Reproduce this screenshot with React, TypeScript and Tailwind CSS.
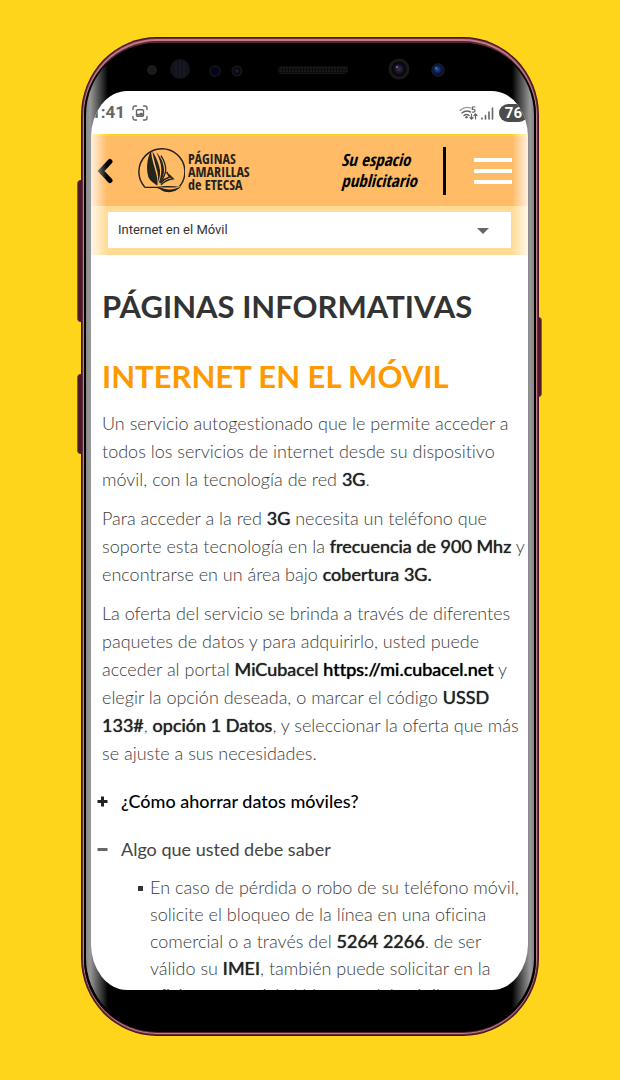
import React from "react";

const fade =
  "pointer-events-none absolute inset-y-0 w-4 from-white/80 to-transparent";

function Sensors() {
  return (
    <svg viewBox="0 0 320 28" className="h-7 w-80" aria-hidden="true">
      <defs>
        <pattern id="mesh" width="3" height="3" patternUnits="userSpaceOnUse">
          <rect width="3" height="3" fill="#0c0c0c" />
          <circle cx="1" cy="1" r="0.8" fill="#2c2c2c" />
        </pattern>
        <radialGradient id="blue" cx="45%" cy="45%">
          <stop offset="0" stopColor="#2a55a8" />
          <stop offset="0.5" stopColor="#0c2560" />
          <stop offset="1" stopColor="#050a1c" />
        </radialGradient>
        <radialGradient id="lens">
          <stop offset="0" stopColor="#3b2f4c" />
          <stop offset="0.6" stopColor="#0c0912" />
          <stop offset="1" stopColor="#020202" />
        </radialGradient>
      </defs>
      <circle cx="7" cy="15" r="5" fill="#1b1b1d" />
      <circle cx="35" cy="14" r="10" fill="#13131a" />
      <path d="M31 7v14M35 6v16M39 7v14" stroke="#1b1b2a" strokeWidth="1.5" />
      <circle cx="70" cy="16" r="5" fill="#03031c" stroke="#11111d" strokeWidth="2" />
      <circle cx="92" cy="16" r="4.5" fill="#05050c" stroke="#14141e" strokeWidth="2" />
      <circle cx="92" cy="16" r="2" fill="#1c1c30" />
      <rect x="133" y="11" width="70" height="8" rx="4" fill="url(#mesh)" />
      <circle cx="254" cy="14" r="9" fill="url(#lens)" stroke="#19191b" strokeWidth="3" />
      <circle cx="252" cy="12" r="1.3" fill="#6b5880" />
      <circle cx="293" cy="15" r="6" fill="url(#blue)" stroke="#141c2c" strokeWidth="1.5" />
      <circle cx="291" cy="13" r="1.2" fill="#3c69b8" />
    </svg>
  );
}

function CaptureIcon() {
  return (
    <svg viewBox="0 0 16 16" className="size-4" fill="none" stroke="#666" strokeWidth="1.4" strokeLinecap="round" aria-hidden="true">
      <path d="M1 4.500V3a2 2 0 0 1 2-2h1.500M11.500 1H13a2 2 0 0 1 2 2v1.500M15 11.500V13a2 2 0 0 1-2 2h-1.500M4.500 15H3a2 2 0 0 1-2-2v-1.500" />
      <rect x="4.500" y="4.800" width="7" height="6.400" rx="1" />
      <path d="M5 10.500V8.500l2 .6 2.200-1.600 1.800 1.200v2z" fill="#666" stroke="none" />
    </svg>
  );
}

function SignalIcons() {
  return (
    <svg viewBox="0 0 36 16" className="h-4 w-9" fill="none" stroke="#666" strokeLinecap="round" aria-hidden="true">
      <path d="M1 5.500Q6 1 12 3" strokeWidth="1.200" stroke="#999" />
      <path d="M3 8Q7 4.500 11.500 7M5 10.500q2.500-2 5 0" strokeWidth="1.500" />
      <circle cx="7.500" cy="12.300" r="1.200" fill="#666" stroke="none" />
      <path d="M16 2h-2.600v2.300c3.500-.6 3.500 3.200.2 2.900" strokeWidth="1.200" />
      <path d="M12.500 9v5M11 12.500l1.500 1.700 1.500-1.700M16.500 14V9M15 10.500l1.500-1.700 1.500 1.700" strokeWidth="1.200" />
      <path d="M23 14v-1M26.500 14v-3.500M30 14V7M33.500 14V3" strokeWidth="1.600" />
    </svg>
  );
}

function Logo() {
  return (
    <a href="#inicio" className="flex items-center gap-[3px] text-[#26231d]">
      <svg viewBox="22 24 144 144" className="size-12" aria-hidden="true">
        <path d="M45 144A69 69 0 1 1 150 142" fill="none" stroke="currentColor" strokeWidth="4.500" />
        <path d="M42 143h38c14 0 18 6 32 8 16 2 30-2 42-9-10 14-28 19-44 17-13-1-18-11-30-12H46z" fill="currentColor" />
        <path d="M84 143c18-3 44-3 66 0-22 4-46 3-66 0z" fill="currentColor" />
        <path d="M64 36C51 58 49 95 57 116c6 11 17 17 26 24 2-12 0-22-3-34C75 84 66 62 64 36z" fill="currentColor" />
        <path d="M68 37c4 24 10 44 15 62 2 10 3 20 2 30 7-15 8-31 4-45-4-16-11-32-21-47z" fill="currentColor" />
        <path d="M80 40c9 18 15 36 15 52 0 16-4 28-8 42 12-14 17-27 16-43-1-20-10-37-23-51z" fill="currentColor" />
        <path d="M94 50c10 16 15 30 14 44-1 13-8 25-17 38" fill="none" stroke="currentColor" strokeWidth="4" />
        <path d="M92 132c7-8 15-14 28-18l-9-15M94 137c10-10 22-16 36-18l-12-12" fill="none" stroke="currentColor" strokeWidth="4.500" />
      </svg>
      <span className="block font-['Open_Sans_Condensed','Roboto_Condensed',Roboto,sans-serif] text-[14px] leading-[13px] font-bold">
        PÁGINAS
        <br />
        AMARILLAS
        <br />
        de ETECSA
      </span>
    </a>
  );
}

function B({ children }: { children: React.ReactNode }) {
  return (
    <strong className="font-normal text-[#222] [text-shadow:0_0_1px_#222]">{children}</strong>
  );
}

export default function App() {
  return (
    <div className="flex h-screen bg-[#ffd51c] px-[81px] pt-[37px] pb-[44px] font-['Lato',sans-serif]">
      <div className="relative flex min-w-0 flex-1">
        <span className="absolute top-[143px] -left-1 h-[142px] w-[5px] rounded-l-sm border-l border-[#7d5a4a] bg-[#4a1a28]" />
        <span className="absolute top-[337px] -left-1 h-[80px] w-[5px] rounded-l-sm border-l border-[#7d5a4a] bg-[#4a1a28]" />
        <span className="absolute top-[280px] -right-[3px] h-[80px] w-1 rounded-r-sm border-r border-[#8d5560] bg-[#4a1a28]" />
        <div className="flex min-w-0 flex-1 rounded-[76px/78px] bg-[#3d1621] p-px">
          <div className="flex min-w-0 flex-1 rounded-[75px/77px] bg-[#6b2c3b] p-px">
            <div className="flex min-w-0 flex-1 rounded-[74px/76px] bg-[#c17c88] px-px pt-[2px] pb-px">
              <div className="flex min-w-0 flex-1 rounded-[73px/74px] bg-[#5a2431] pt-[2px] pb-px">
                <div className="flex min-w-0 flex-1 rounded-[73px/72px] bg-black px-[2px] pb-[2px]">
                  <div className="flex min-w-0 flex-1 flex-col rounded-[71px/72px] bg-[linear-gradient(to_right,#888,#999_4px,#777_8px,#000_22px,#000_calc(100%-22px),#777_calc(100%-8px),#999_calc(100%-4px),#888)] pr-[6px] pb-10 pl-[5px]">
                    <div className="flex h-[48px] shrink-0 items-center justify-center pt-[4px]">
                      <div className="-ml-[10px]">
                        <Sensors />
                      </div>
                    </div>
                    <main className="relative min-h-0 flex-1 overflow-hidden rounded-[36px/46px] bg-white">
                      <div className="flex h-[43px] items-center justify-between font-['Roboto',sans-serif] text-[#666]">
                        <div className="flex items-center gap-[7px]">
                          <span className="text-[17px] font-bold">1:41</span>
                          <CaptureIcon />
                        </div>
                        <div className="flex items-center gap-1">
                          <SignalIcons />
                          <span className="rounded-full bg-[#4c4c4c] px-[6px] text-[15px] leading-[18px] font-bold text-white">76</span>
                        </div>
                      </div>
                      <div className="relative">
                        <header className="flex h-[72px] items-center border-t-2 border-[#ffd51c] bg-[#ffbb66] pr-4 pl-[6px]">
                          <button type="button" aria-label="Volver" className="mr-6">
                            <svg viewBox="0 0 16 26" className="h-[26px] w-4" fill="none" stroke="#000" strokeWidth="5" strokeLinecap="round" strokeLinejoin="miter" aria-hidden="true">
                              <path d="M13 3.500 4 13l9 9.500" />
                            </svg>
                          </button>
                          <Logo />
                          <p className="ml-auto pb-[2px] font-['Open_Sans_Condensed','Lato',sans-serif] text-[17px] leading-[21px] font-bold whitespace-nowrap text-black italic">
                            Su espacio
                            <br />
                            publicitario
                          </p>
                          <span className="mr-7 ml-[26px] h-12 w-[3px] bg-black" />
                          <button type="button" aria-label="Menú" className="flex w-[38px] flex-col gap-[7px]">
                            <span className="h-1 w-full bg-white" />
                            <span className="h-1 w-full bg-white" />
                            <span className="h-1 w-full bg-white" />
                          </button>
                        </header>
                        <div className="relative bg-[#ffdb96] px-[17px] pt-[6px] pb-[7px]">
                          <select aria-label="Página informativa" className="block h-9 w-full appearance-none bg-white pl-[10px] font-['Roboto',sans-serif] text-[13px] text-[#333]">
                            <option>Internet en el Móvil</option>
                          </select>
                          <svg viewBox="0 0 12 6" className="pointer-events-none absolute top-[22px] right-[39px] h-[6px] w-3" aria-hidden="true">
                            <path d="M0 0h12L6 6z" fill="#666" />
                          </svg>
                        </div>
                        <span className={fade + " left-0 bg-linear-to-r"} />
                        <span className={fade + " right-0 bg-linear-to-l"} />
                      </div>
                      <article className="pt-[30px] pr-2 pl-[11px] text-[18px] leading-7 font-light whitespace-nowrap text-[#3c3c3c] [font-variant-ligatures:none]">
                        <h1 className="text-[31px] leading-[42px] font-bold text-[#333]">PÁGINAS INFORMATIVAS</h1>
                        <h2 className="mt-7 text-[31px] leading-[42px] font-bold text-[#ff9900]">INTERNET EN EL MÓVIL</h2>
                        <p className="mt-3">
                          Un servicio autogestionado que le permite acceder a<br />
                          todos los servicios de internet desde su dispositivo<br />
                          móvil, con la tecnología de red <B>3G</B>.
                        </p>
                        <p className="mt-[11px]">
                          Para acceder a la red <B>3G</B> necesita un teléfono que<br />
                          soporte esta tecnología en la <B>frecuencia de 900 Mhz</B> y<br />
                          encontrarse en un área bajo <B>cobertura 3G.</B>
                        </p>
                        <p className="mt-[11px]">
                          La oferta del servicio se brinda a través de diferentes<br />
                          paquetes de datos y para adquirirlo, usted puede<br />
                          acceder al portal <B>MiCubacel</B>{" "}
                          <a href="https://mi.cubacel.net" className="font-normal text-black [text-shadow:0_0_1px_#000]">https://mi.cubacel.net</a> y<br />
                          elegir la opción deseada, o marcar el código <B>USSD</B><br />
                          <B>133#</B>, <B>opción 1 Datos</B>, y seleccionar la oferta que más<br />
                          se ajuste a sus necesidades.
                        </p>
                        <button type="button" aria-expanded="false" className="mt-5 -ml-[5px] flex items-center gap-[13px] text-[18px] leading-7 font-medium text-black">
                          <svg viewBox="0 0 11 11" className="size-[11px]" stroke="#222" strokeWidth="3" aria-hidden="true">
                            <path d="M0.500 5.500h10M5.500 0.500v10" />
                          </svg>
                          ¿Cómo ahorrar datos móviles?
                        </button>
                        <button type="button" aria-expanded="true" className="mt-5 -ml-[5px] flex items-center gap-[13px] text-[18px] leading-7 font-normal text-[#444]">
                          <svg viewBox="0 0 11 11" className="size-[11px]" stroke="#666" strokeWidth="3" aria-hidden="true">
                            <path d="M0.500 5.500h10" />
                          </svg>
                          Algo que usted debe saber
                        </button>
                        <ul className="mt-[11px] pl-12 leading-[27px]">
                          <li className="relative">
                            <span className="absolute top-3 -left-3 size-[5px] bg-[#333]" />
                            En caso de pérdida o robo de su teléfono móvil,<br />
                            solicite el bloqueo de la línea en una oficina<br />
                            comercial o a través del <B>5264 2266</B>. de ser<br />
                            válido su <B>IMEI</B>, también puede solicitar en la<br />
                            oficina comercial el bloqueo del móvil.
                          </li>
                        </ul>
                      </article>
                    </main>
                  </div>
                </div>
              </div>
            </div>
          </div>
        </div>
      </div>
    </div>
  );
}
